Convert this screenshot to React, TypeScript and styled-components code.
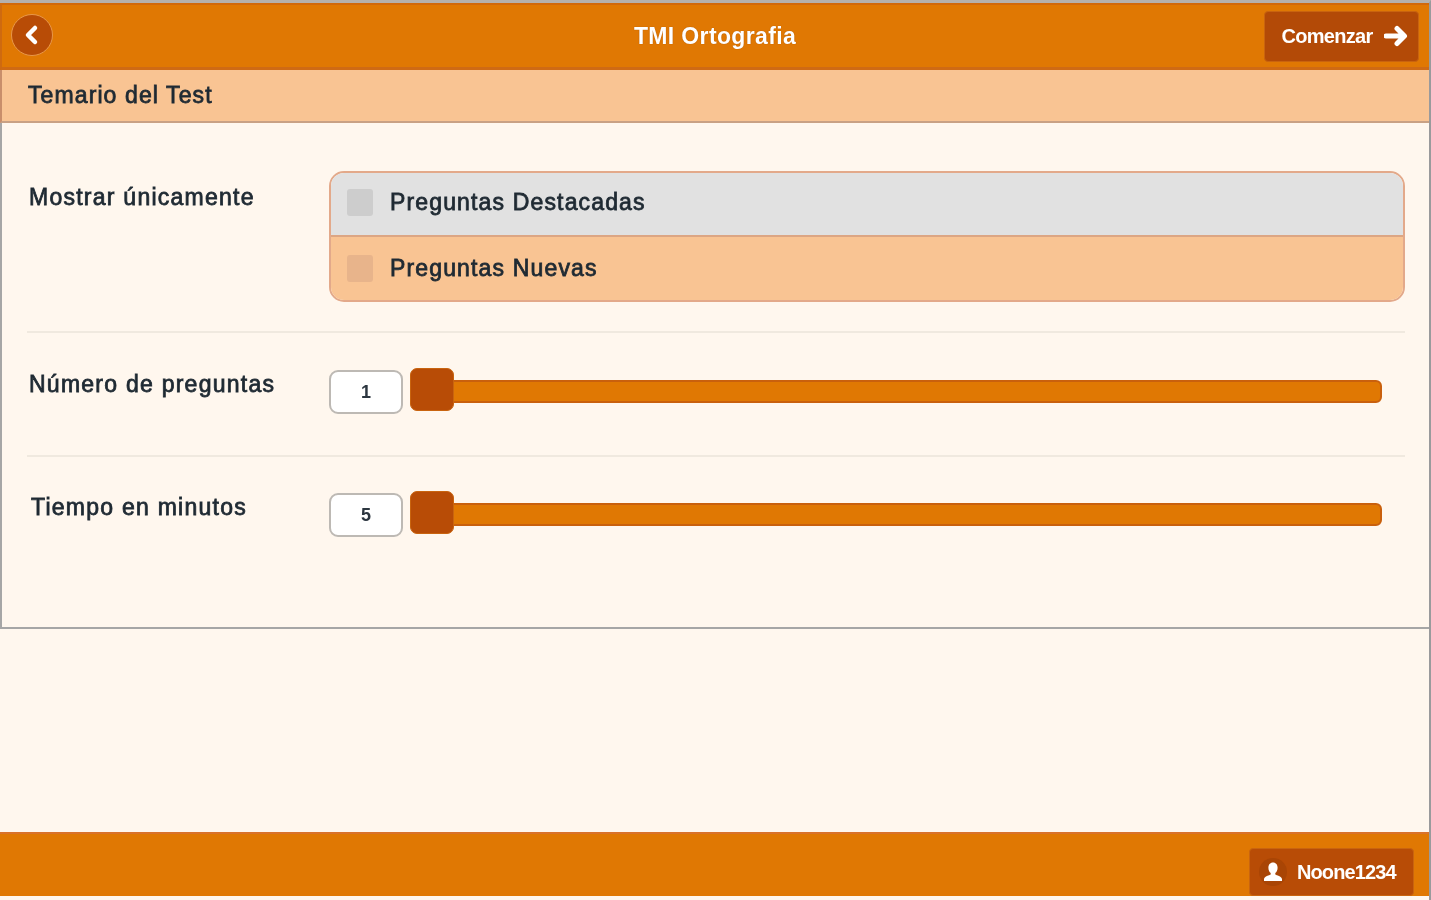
import React from "react";
import styled, { createGlobalStyle } from "styled-components";

const Global = createGlobalStyle`
  html, body { margin: 0; padding: 0; height: 100%; background: #fff7ee; }
  body { font-family: "Liberation Sans", Arial, sans-serif; overflow: hidden; }
`;

const Page = styled.div`
  width: 1431px;
  height: 900px;
  box-sizing: border-box;
  display: flex;
  flex-direction: column;
  background: #fff7ee;
  border-top: 3px solid #b5b1ad;
  border-right: 2px solid #9a9a9c;
  filter: blur(0.7px);
`;

const Header = styled.header`
  height: 67px;
  box-sizing: border-box;
  flex: none;
  display: grid;
  grid-template-columns: 1fr auto 1fr;
  align-items: center;
  padding: 0 10px 0 9px;
  background: #e07803;
  border-top: 2px solid #d2690b;
  border-bottom: 3px solid #cf6a14;
  border-left: 2px solid #cf6a10;
`;

const BackButton = styled.div`
  width: 42px;
  height: 42px;
  box-sizing: border-box;
  border-radius: 50%;
  background: #b84c06;
  border: 1px solid #e8974a;
  display: flex;
  align-items: center;
  justify-content: center;
  justify-self: start;
  margin-top: -3px;
`;

const Title = styled.h1`
  margin: 0;
  font-size: 23px;
  font-weight: 700;
  letter-spacing: 0.35px;
  color: #fff;
  text-shadow: 0 0 1px rgba(120, 50, 0, 0.6);
`;

const HeaderAction = styled.div`
  justify-self: end;
  width: 155px;
  height: 51px;
  box-sizing: border-box;
  padding-left: 6px;
  background: #b34a07;
  border: 1px solid #c9640f;
  border-radius: 4px;
  display: flex;
  align-items: center;
  justify-content: center;
  gap: 11px;
  color: #fff;
  font-size: 20px;
  font-weight: 700;
  letter-spacing: -0.7px;
`;

const SubHeader = styled.div`
  height: 53px;
  flex: none;
  box-sizing: border-box;
  display: flex;
  align-items: center;
  padding: 0 0 0 26px;
  background: #f9c493;
  border-bottom: 2px solid #c9a184;
  border-left: 2px solid #c98e6a;
  font-size: 23px;
  letter-spacing: 1.1px;
  color: #1f2a33;
  -webkit-text-stroke: 0.8px #1f2a33;
`;

const Panel = styled.section`
  height: 506px;
  flex: none;
  box-sizing: border-box;
  padding: 0 24px 0 25px;
  border-left: 2px solid #a6a6a6;
  border-bottom: 2px solid #a6a6a6;
`;

const Row = styled.div<{ $height: number; $divider?: boolean }>`
  height: ${(p) => p.$height}px;
  box-sizing: border-box;
  display: grid;
  grid-template-columns: 302px 1fr;
  border-bottom: ${(p) => (p.$divider ? "2px solid #f0e9df" : "none")};
`;

const Label = styled.div<{ $top: number; $left?: number }>`
  padding-top: ${(p) => p.$top}px;
  padding-left: ${(p) => p.$left ?? 2}px;
  font-size: 23px;
  line-height: 28px;
  letter-spacing: 1.25px;
  white-space: nowrap;
  color: #1f2a33;
  -webkit-text-stroke: 0.8px #1f2a33;
`;

const OptionList = styled.div`
  margin-top: 48px;
  height: 131px;
  box-sizing: border-box;
  border: 2px solid #e3a98a;
  border-radius: 15px;
  overflow: hidden;
  display: flex;
  flex-direction: column;
`;

const Option = styled.div<{ $selected?: boolean }>`
  flex: ${(p) => (p.$selected ? "0 0 64px" : "1")};
  box-sizing: border-box;
  display: flex;
  align-items: center;
  gap: 17px;
  padding-left: 16px;
  padding-bottom: ${(p) => (p.$selected ? "3px" : "1px")};
  font-size: 23px;
  letter-spacing: 1.15px;
  color: #1f2a33;
  -webkit-text-stroke: 0.8px #1f2a33;
  background: ${(p) => (p.$selected ? "#e1e1e1" : "#f9c493")};
  border-bottom: ${(p) => (p.$selected ? "2px solid #dca684" : "none")};
`;

const Check = styled.span<{ $selected?: boolean }>`
  width: 26px;
  height: 27px;
  border-radius: 3px;
  background: ${(p) => (p.$selected ? "#cdcdcd" : "#e8b48b")};
`;

const SliderLine = styled.div<{ $top: number }>`
  margin-top: ${(p) => p.$top}px;
  padding-right: 23px;
  display: flex;
  align-items: flex-start;
  gap: 8px;
`;

const ValueBox = styled.div`
  width: 74px;
  height: 44px;
  flex: none;
  margin-top: 2px;
  box-sizing: border-box;
  background: #fff;
  border: 2px solid #bdb9b4;
  border-radius: 9px;
  display: flex;
  align-items: center;
  justify-content: center;
  font-size: 18px;
  font-weight: 700;
  color: #2c3640;
`;

const Track = styled.div`
  position: relative;
  flex: 1;
  height: 23px;
  margin-top: 12px;
  box-sizing: border-box;
  background: #e07803;
  border: 2px solid #c9600d;
  border-radius: 6px;
`;

const Thumb = styled.div`
  position: absolute;
  left: -3px;
  top: -14px;
  width: 44px;
  height: 43px;
  box-sizing: border-box;
  background: #b84c06;
  border: 1px solid #c9640f;
  border-radius: 7px;
`;

const Spacer = styled.div`
  flex: 1;
`;

const Footer = styled.footer`
  height: 64px;
  flex: none;
  box-sizing: border-box;
  margin-bottom: 4px;
  background: #e07803;
  border-top: 2px solid #d9722a;
  display: flex;
  justify-content: flex-end;
  align-items: flex-end;
  padding-right: 15px;
`;

const UserButton = styled.div`
  width: 165px;
  height: 48px;
  box-sizing: border-box;
  background: #b84c06;
  border: 1px solid #c9640f;
  border-radius: 4px;
  display: flex;
  align-items: center;
  padding-left: 9px;
  gap: 10px;
  color: #fff;
  font-size: 20px;
  font-weight: 700;
  letter-spacing: -0.9px;
`;

const IconCircle = styled.span`
  width: 28px;
  height: 28px;
  border-radius: 50%;
  background: #a94505;
  display: flex;
  align-items: center;
  justify-content: center;
`;

export default function App() {
  return (
    <Page>
      <Global />
      <Header>
        <BackButton>
          <svg width="18" height="24" viewBox="0 0 18 24">
            <path d="M12 5 L5 12 L12 19" fill="none" stroke="#fff" strokeWidth="4.5" strokeLinecap="round" strokeLinejoin="round" />
          </svg>
        </BackButton>
        <Title>TMI Ortografia</Title>
        <HeaderAction>
          Comenzar
          <svg width="24" height="24" viewBox="0 0 24 24">
            <path d="M2 12 H20 M13 4.5 L20.5 12 L13 19.5" fill="none" stroke="#fff" strokeWidth="5" strokeLinejoin="round" strokeLinecap="round" />
          </svg>
        </HeaderAction>
      </Header>
      <SubHeader>Temario del Test</SubHeader>
      <Panel>
        <Row $height={210} $divider>
          <Label $top={60}>Mostrar únicamente</Label>
          <OptionList>
            <Option $selected>
              <Check $selected />
              <span>Preguntas Destacadas</span>
            </Option>
            <Option>
              <Check />
              <span>Preguntas Nuevas</span>
            </Option>
          </OptionList>
        </Row>
        <Row $height={124} $divider>
          <Label $top={37}>Número de preguntas</Label>
          <SliderLine $top={35}>
            <ValueBox>1</ValueBox>
            <Track>
              <Thumb />
            </Track>
          </SliderLine>
        </Row>
        <Row $height={170}>
          <Label $top={36} $left={4}>Tiempo en minutos</Label>
          <SliderLine $top={34}>
            <ValueBox>5</ValueBox>
            <Track>
              <Thumb />
            </Track>
          </SliderLine>
        </Row>
      </Panel>
      <Spacer />
      <Footer>
        <UserButton>
          <IconCircle>
            <svg width="24" height="24" viewBox="0 0 24 24">
              <path d="M12 2.5c3 0 4.6 2.3 4.6 5.2 0 2.4-1 4.3-2.3 5.3v1.6c1.4.8 6.2 1.7 6.7 4.4v2H3v-2c.5-2.7 5.3-3.6 6.7-4.4V13c-1.3-1-2.3-2.9-2.3-5.3C7.4 4.8 9 2.5 12 2.5z" fill="#fff" />
            </svg>
          </IconCircle>
          Noone1234
        </UserButton>
      </Footer>
    </Page>
  );
}
